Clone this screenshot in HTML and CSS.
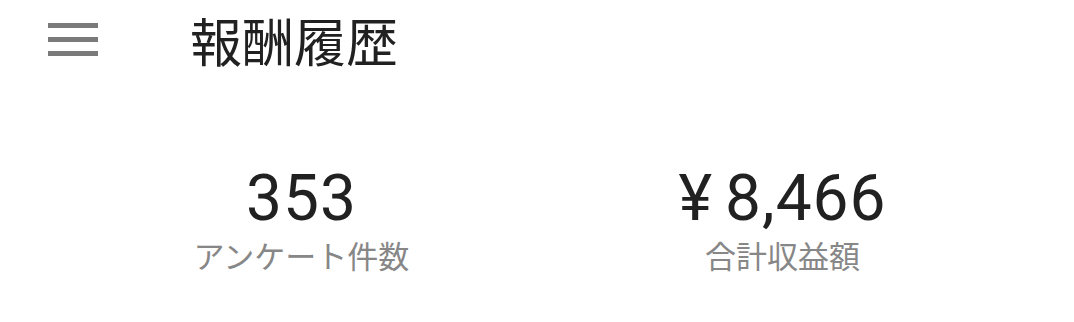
FILE: index.html
```html
<!DOCTYPE html>
<html lang="ja">
<head>
<meta charset="utf-8">
<title>報酬履歴</title>
<link rel="stylesheet" href="styles.css">
</head>
<body>
<header class="appbar">
  <button class="menu" aria-label="menu">
    <svg width="50" height="34" viewBox="0 0 50 34"><rect x="0" y="0" width="50" height="5" fill="#7a7a7a"/><rect x="0" y="14" width="50" height="5" fill="#7a7a7a"/><rect x="0" y="28" width="50" height="5" fill="#7a7a7a"/></svg>
  </button>
  <h1 class="title">報酬履歴</h1>
</header>
<main class="stats">
  <div class="stat">
    <div class="value">353</div>
    <div class="label">アンケート件数</div>
  </div>
  <div class="stat">
    <div class="value"><span class="yen">¥</span>8,466</div>
    <div class="label">合計収益額</div>
  </div>
</main>
</body>
</html>
```
FILE: styles.css
```css
html, body {
  margin: 0;
  padding: 0;
  background: #ffffff;
  font-family: Roboto, "Noto Sans CJK JP", sans-serif;
}
.appbar {
  display: flex;
  align-items: center;
  height: 80px;
  padding-left: 48px;
}
.menu {
  border: 0;
  background: none;
  padding: 0;
  width: 50px;
  height: 34px;
  display: flex;
}
.title {
  margin: 0 0 0 92px;
  font-family: "Noto Sans CJK JP", sans-serif;
  font-weight: 400;
  font-size: 52px;
  line-height: 1;
  color: #212121;
}
.stats {
  display: grid;
  grid-template-columns: 1fr 1fr;
  padding: 89px 51px 0 61px;
}
.stat {
  display: flex;
  flex-direction: column;
  align-items: center;
}
.value {
  height: 60px;
  font-family: Roboto, sans-serif;
  font-size: 64px;
  line-height: 60px;
  color: #212121;
  letter-spacing: 1px;
}
.yen {
  margin-right: 12px;
}
.label {
  margin-top: 9px;
  font-family: "Noto Sans CJK JP", sans-serif;
  font-size: 31px;
  line-height: 34px;
  color: #878787;
}
```
